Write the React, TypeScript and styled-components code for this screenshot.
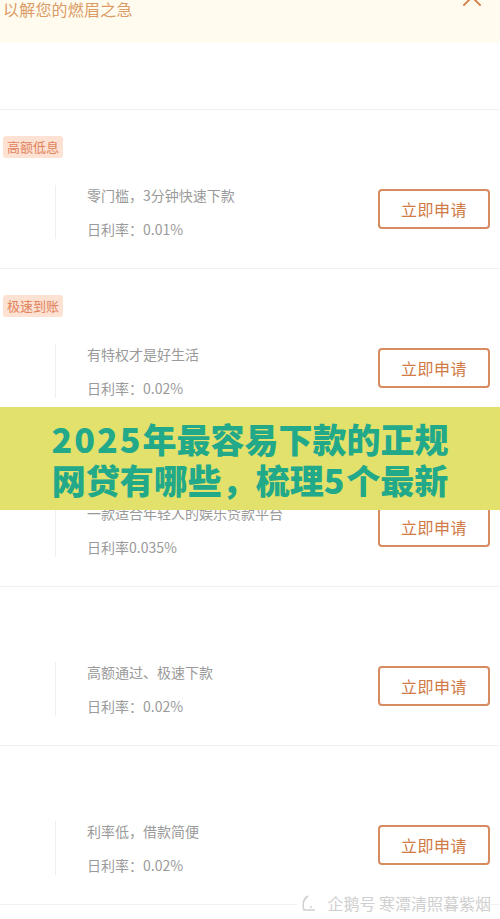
import React from 'react'
import styled, { createGlobalStyle } from 'styled-components'

const GlobalStyle = createGlobalStyle`
  html, body {
    margin: 0;
    padding: 0;
    background: #ffffff;
  }
  body {
    font-family: "Noto Sans CJK SC", "Noto Sans", sans-serif;
  }
`

const Page = styled.div`
  position: relative;
  width: 500px;
  height: 919px;
  overflow: hidden;
  background: #ffffff;
`

const Header = styled.div`
  display: flex;
  justify-content: space-between;
  align-items: flex-start;
  height: 43px;
  padding: 0 18px 0 3px;
  background: #fffbee;
`

const HeaderTitle = styled.div`
  margin-top: -1px;
  font-size: 16px;
  line-height: 20px;
  color: #dc9b66;
  letter-spacing: 0.2px;
`

const Chevron = styled.svg`
  margin-top: -7px;
`

const Spacer = styled.div`
  height: 66px;
  border-bottom: 1px solid #f1f1f1;
`

const Card = styled.div`
  display: flex;
  flex-direction: column;
  height: 159px;
  padding-top: 26px;
  box-sizing: border-box;
  border-bottom: 1px solid #f1f1f1;
`

const Tag = styled.span<{ $hidden?: boolean }>`
  align-self: flex-start;
  visibility: ${p => (p.$hidden ? 'hidden' : 'visible')};
  height: 22px;
  margin-left: 3px;
  padding: 0 4px;
  border-radius: 3px;
  background: #fde1d2;
  color: #e0835c;
  font-size: 13px;
  line-height: 22px;
`

const Body = styled.div`
  display: flex;
  align-items: center;
  margin-top: 27px;
  padding-right: 10px;
`

const Info = styled.div`
  display: flex;
  flex-direction: column;
  gap: 14px;
  flex: 1;
  margin-left: 55px;
  padding-left: 31px;
  border-left: 1px solid #efefef;
`

const InfoLine = styled.div`
  font-size: 14px;
  line-height: 20px;
  color: #9a9a9a;
`

const ApplyButton = styled.button`
  width: 112px;
  height: 40px;
  margin-top: -7px;
  border: 2px solid #d68b61;
  border-radius: 4px;
  background: #ffffff;
  color: #d07a46;
  font-family: "Noto Sans CJK SC", sans-serif;
  font-size: 16px;
  letter-spacing: 0.5px;
  padding: 0;
`

const Banner = styled.div`
  position: absolute;
  left: 0;
  right: 0;
  top: 407px;
  height: 103px;
  display: flex;
  flex-direction: column;
  align-items: center;
  justify-content: center;
  background: #e1e16c;
`

const BannerLine = styled.div`
  font-family: "Noto Sans CJK SC", sans-serif;
  font-weight: 900;
  font-size: 34px;
  line-height: 41px;
  color: #22a98a;
  white-space: nowrap;
`

const Digits = styled.span`
  letter-spacing: 2px;
`

const Watermark = styled.div`
  position: absolute;
  right: 9px;
  bottom: 5px;
  display: flex;
  align-items: center;
  gap: 10px;
  padding-left: 4px;
  background: #ffffff;
  color: #cfcfcf;
  font-size: 16px;
  line-height: 22px;
`

type Item = { tag?: string; title: string; rate: string }

const items: Item[] = [
  { tag: '高额低息', title: '零门槛，3分钟快速下款', rate: '日利率：0.01%' },
  { tag: '极速到账', title: '有特权才是好生活', rate: '日利率：0.02%' },
  { tag: '极速到账', title: '一款适合年轻人的娱乐贷款平台', rate: '日利率0.035%' },
  { title: '高额通过、极速下款', rate: '日利率：0.02%' },
  { title: '利率低，借款简便', rate: '日利率：0.02%' },
]

export default function App() {
  return (
    <>
      <GlobalStyle />
      <Page>
        <Header>
          <HeaderTitle>以解您的燃眉之急</HeaderTitle>
          <Chevron width="20" height="14" viewBox="0 0 20 14">
            <path d="M2 12 L10 4 L18 12" fill="none" stroke="#d9864f" strokeWidth="2" strokeLinecap="round" />
          </Chevron>
        </Header>
        <Spacer />
        {items.map((it, i) => (
          <Card key={i}>
            <Tag $hidden={!it.tag}>{it.tag || '占位'}</Tag>
            <Body>
              <Info>
                <InfoLine>{it.title}</InfoLine>
                <InfoLine>{it.rate}</InfoLine>
              </Info>
              <ApplyButton>立即申请</ApplyButton>
            </Body>
          </Card>
        ))}
        <Banner>
          <BannerLine>
            <Digits>2025</Digits>年最容易下款的正规
          </BannerLine>
          <BannerLine>
            网贷有哪些，梳理<Digits>5</Digits>个最新
          </BannerLine>
        </Banner>
        <Watermark>
          <svg width="16" height="18" viewBox="0 0 16 18">
            <path d="M7 2 C2 5 1 11 3 16 L14 16" fill="none" stroke="#cfcfcf" strokeWidth="1.5" />
            <circle cx="10" cy="13" r="1" fill="#cfcfcf" />
          </svg>
          <span>企鹅号 寒潭清照暮紫烟</span>
        </Watermark>
      </Page>
    </>
  )
}
